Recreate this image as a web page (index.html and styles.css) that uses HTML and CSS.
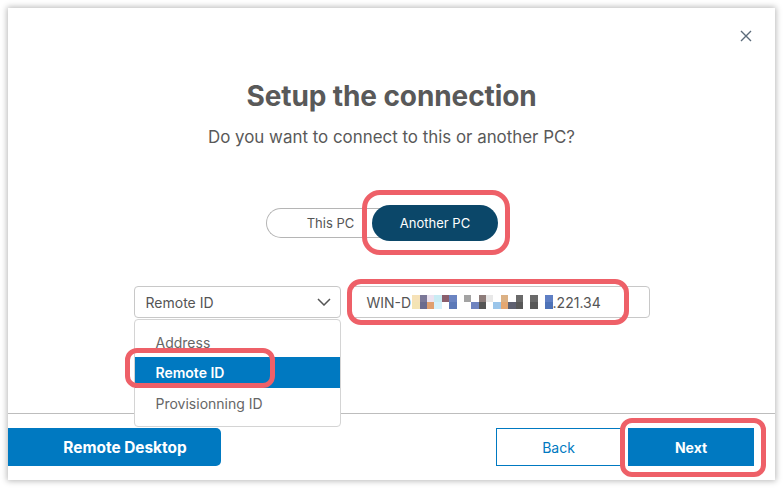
FILE: index.html
```html
<!DOCTYPE html>
<html lang="en">
<head>
<meta charset="utf-8">
<title>Setup the connection</title>
<link rel="stylesheet" href="styles.css">
</head>
<body>
<div class="dialog">
  <div class="top">
    <button class="close" aria-label="Close">
      <svg width="12" height="12" viewBox="0 0 12 12"><path d="M1 1L11 11M11 1L1 11" stroke="#5b6b7a" stroke-width="1.4" fill="none"/></svg>
    </button>
  </div>
  <h1 class="title">Setup the connection</h1>
  <p class="subtitle">Do you want to connect to this or another PC?</p>

  <div class="toggle-wrap">
    <div class="toggle">
      <span class="opt">This PC</span>
      <span class="opt active">Another PC<span class="mark mark-toggle"></span></span>
    </div>
  </div>

  <div class="form-row">
    <div class="select-wrap">
      <div class="select">
        <span>Remote ID</span>
        <svg width="14" height="8" viewBox="0 0 14 8"><path d="M1 1L7 7L13 1" stroke="#555" stroke-width="1.5" fill="none"/></svg>
      </div>
      <ul class="menu">
        <li>Address</li>
        <li class="sel">Remote ID<span class="mark mark-item"></span></li>
        <li>Provisionning ID</li>
      </ul>
    </div>
    <div class="input">
      <span class="val">WIN-D<span class="blur">
        <i style="background:#f6e2b8"></i><i style="background:#7b7898"></i><i style="background:#ece3f0"></i><i style="background:#c9ecf4"></i><i style="background:#8a5e6c"></i><i style="background:#6b84c2"></i><i style="background:#fff"></i><i style="background:#a3a3a3"></i><i style="background:#fff"></i><i style="background:#8d7c7a"></i><i style="background:#e8e8e8"></i><i style="background:#fff"></i><i style="background:#dcb184"></i><i style="background:#fff"></i><i style="background:#6a6a6a"></i><i style="background:#fff"></i><i style="background:#6a6a6a"></i><i style="background:#fff"></i><i style="background:#5f7fc4"></i>
        <i style="background:#f4e4b4"></i><i style="background:#6b6b8e"></i><i style="background:#e09f6e"></i><i style="background:#d4f1fb"></i><i style="background:#fff"></i><i style="background:#5c79b8"></i><i style="background:#fff"></i><i style="background:#fff"></i><i style="background:#6f84c0"></i><i style="background:#555"></i><i style="background:#fff"></i><i style="background:#9ac5ea"></i><i style="background:#e4a771"></i><i style="background:#5e6070"></i><i style="background:#585858"></i><i style="background:#fff"></i><i style="background:#595959"></i><i style="background:#fff"></i><i style="background:#4e73b8"></i>
      </span>.221.34</span>
      <span class="mark mark-input"></span>
    </div>
  </div>

  <div class="footer">
    <button class="btn primary wide">Remote Desktop</button>
    <div class="right">
      <button class="btn outline">Back</button>
      <button class="btn primary">Next<span class="mark mark-next"></span></button>
    </div>
  </div>
</div>
</body>
</html>
```

FILE: styles.css
```css
* { box-sizing: border-box; }
html, body { margin: 0; padding: 0; background: #ffffff; }
body {
  font-family: Inter, "Noto Sans", Arial, sans-serif;
  color: #555;
  width: 783px;
  height: 488px;
  overflow: hidden;
  padding: 8px;
}
.dialog {
  position: relative;
  width: 767px;
  height: 472px;
  background: #fff;
  box-shadow: 0 0 6px 1px rgba(0,0,0,0.28);
  display: flex;
  flex-direction: column;
}
.top {
  display: flex;
  justify-content: flex-end;
  padding: 22px 23px 0 0;
  height: 42px;
}
.close {
  border: 0;
  background: none;
  padding: 0;
  width: 12px;
  height: 12px;
  display: block;
  cursor: pointer;
}
.close svg { display: block; }
.title {
  margin: 29px 0 0;
  font-size: 28px;
  line-height: 34px;
  font-weight: 700;
  text-align: center;
  color: #595959;
  letter-spacing: -0.1px;
}
.subtitle {
  margin: 14px 0 0;
  font-size: 16.9px;
  line-height: 20px;
  text-align: center;
  color: #595959;
}
.toggle-wrap {
  display: flex;
  justify-content: center;
  margin-top: 58px;
  padding-right: 19px;
}
.toggle {
  display: flex;
  align-items: center;
  height: 36px;
}
.opt {
  font-size: 13px;
  color: #555;
  display: flex;
  align-items: center;
  justify-content: center;
  position: relative;
}
.opt:first-child {
  width: 114px;
  height: 30px;
  border: 1px solid #b5b5b5;
  border-radius: 15px 0 0 15px;
  border-right: 0;
  padding-left: 14px;
  margin-right: -8px;
}
.opt.active {
  width: 126px;
  height: 36px;
  background: #0b4769;
  color: #fff;
  border-radius: 18px;
}
.mark {
  position: absolute;
  border: 5px solid #ee6068;
  pointer-events: none;
}
.mark-toggle { left: -10px; right: -12px; top: -15px; bottom: -14px; border-radius: 18px; }

.form-row {
  display: flex;
  justify-content: center;
  gap: 9px;
  margin-top: 45px;
  height: 32px;
}
.select-wrap { position: relative; width: 207px; z-index: 2; }
.select {
  height: 32px;
  border: 1px solid #c8c8c8;
  border-radius: 4px;
  display: flex;
  align-items: center;
  justify-content: space-between;
  padding: 0 9px 0 11px;
  font-size: 14px;
  color: #555;
}
.menu {
  position: absolute;
  left: 0; right: 0;
  top: 33px;
  margin: 0;
  padding: 12px 0 0;
  list-style: none;
  background: #fff;
  border: 1px solid #d4d4d4;
  border-radius: 4px;
  height: 108px;
}
.menu li {
  font-size: 14px;
  line-height: 31px;
  padding-left: 21px;
  color: #666;
  position: relative;
}
.menu li:first-child { line-height: 21px; padding-bottom: 4px; }
.menu li.sel { background: #0079c1; color: #fff; font-weight: 600; }
.mark-item { left: -10px; right: 65px; top: -9px; bottom: 0; border-radius: 12px; }

.input {
  position: relative;
  width: 300px;
  height: 32px;
  border: 1px solid #c8c8c8;
  border-radius: 4px;
  display: flex;
  align-items: center;
  padding-left: 16px;
  font-size: 14px;
  color: #555;
}
.val { display: flex; align-items: center; }
.blur {
  display: inline-grid;
  grid-template-columns: repeat(19, 7.4px);
  grid-template-rows: 7px 7px;
  margin: 0 0 0 1px;
}
.blur i { display: block; }
.mark-input { left: -4px; right: 20px; top: -8px; bottom: -8px; border-radius: 14px; }

.footer {
  margin-top: auto;
  border-top: 1px solid #bdbdbd;
  display: flex;
  justify-content: space-between;
  align-items: flex-start;
  padding: 14px 21px 13px 0;
  height: 67px;
}
.right { display: flex; gap: 7px; }
.btn {
  position: relative;
  height: 38px;
  font-family: inherit;
  font-size: 14px;
  border-radius: 4px;
  cursor: pointer;
  padding: 0;
}
.primary {
  background: #0079c1;
  color: #fff;
  border: 0;
  font-weight: 700;
}
.wide {
  width: 213px;
  font-size: 15.4px;
  padding-left: 21px;
  border-radius: 0 5px 5px 0;
}
.outline {
  width: 125px;
  background: #fff;
  border: 1px solid #0079c1;
  color: #0079c1;
  border-radius: 0;
}
.right .primary { width: 126px; border-radius: 0; }
.mark-next { left: -8px; right: -12px; top: -10px; bottom: -11px; border-radius: 12px; }
```
